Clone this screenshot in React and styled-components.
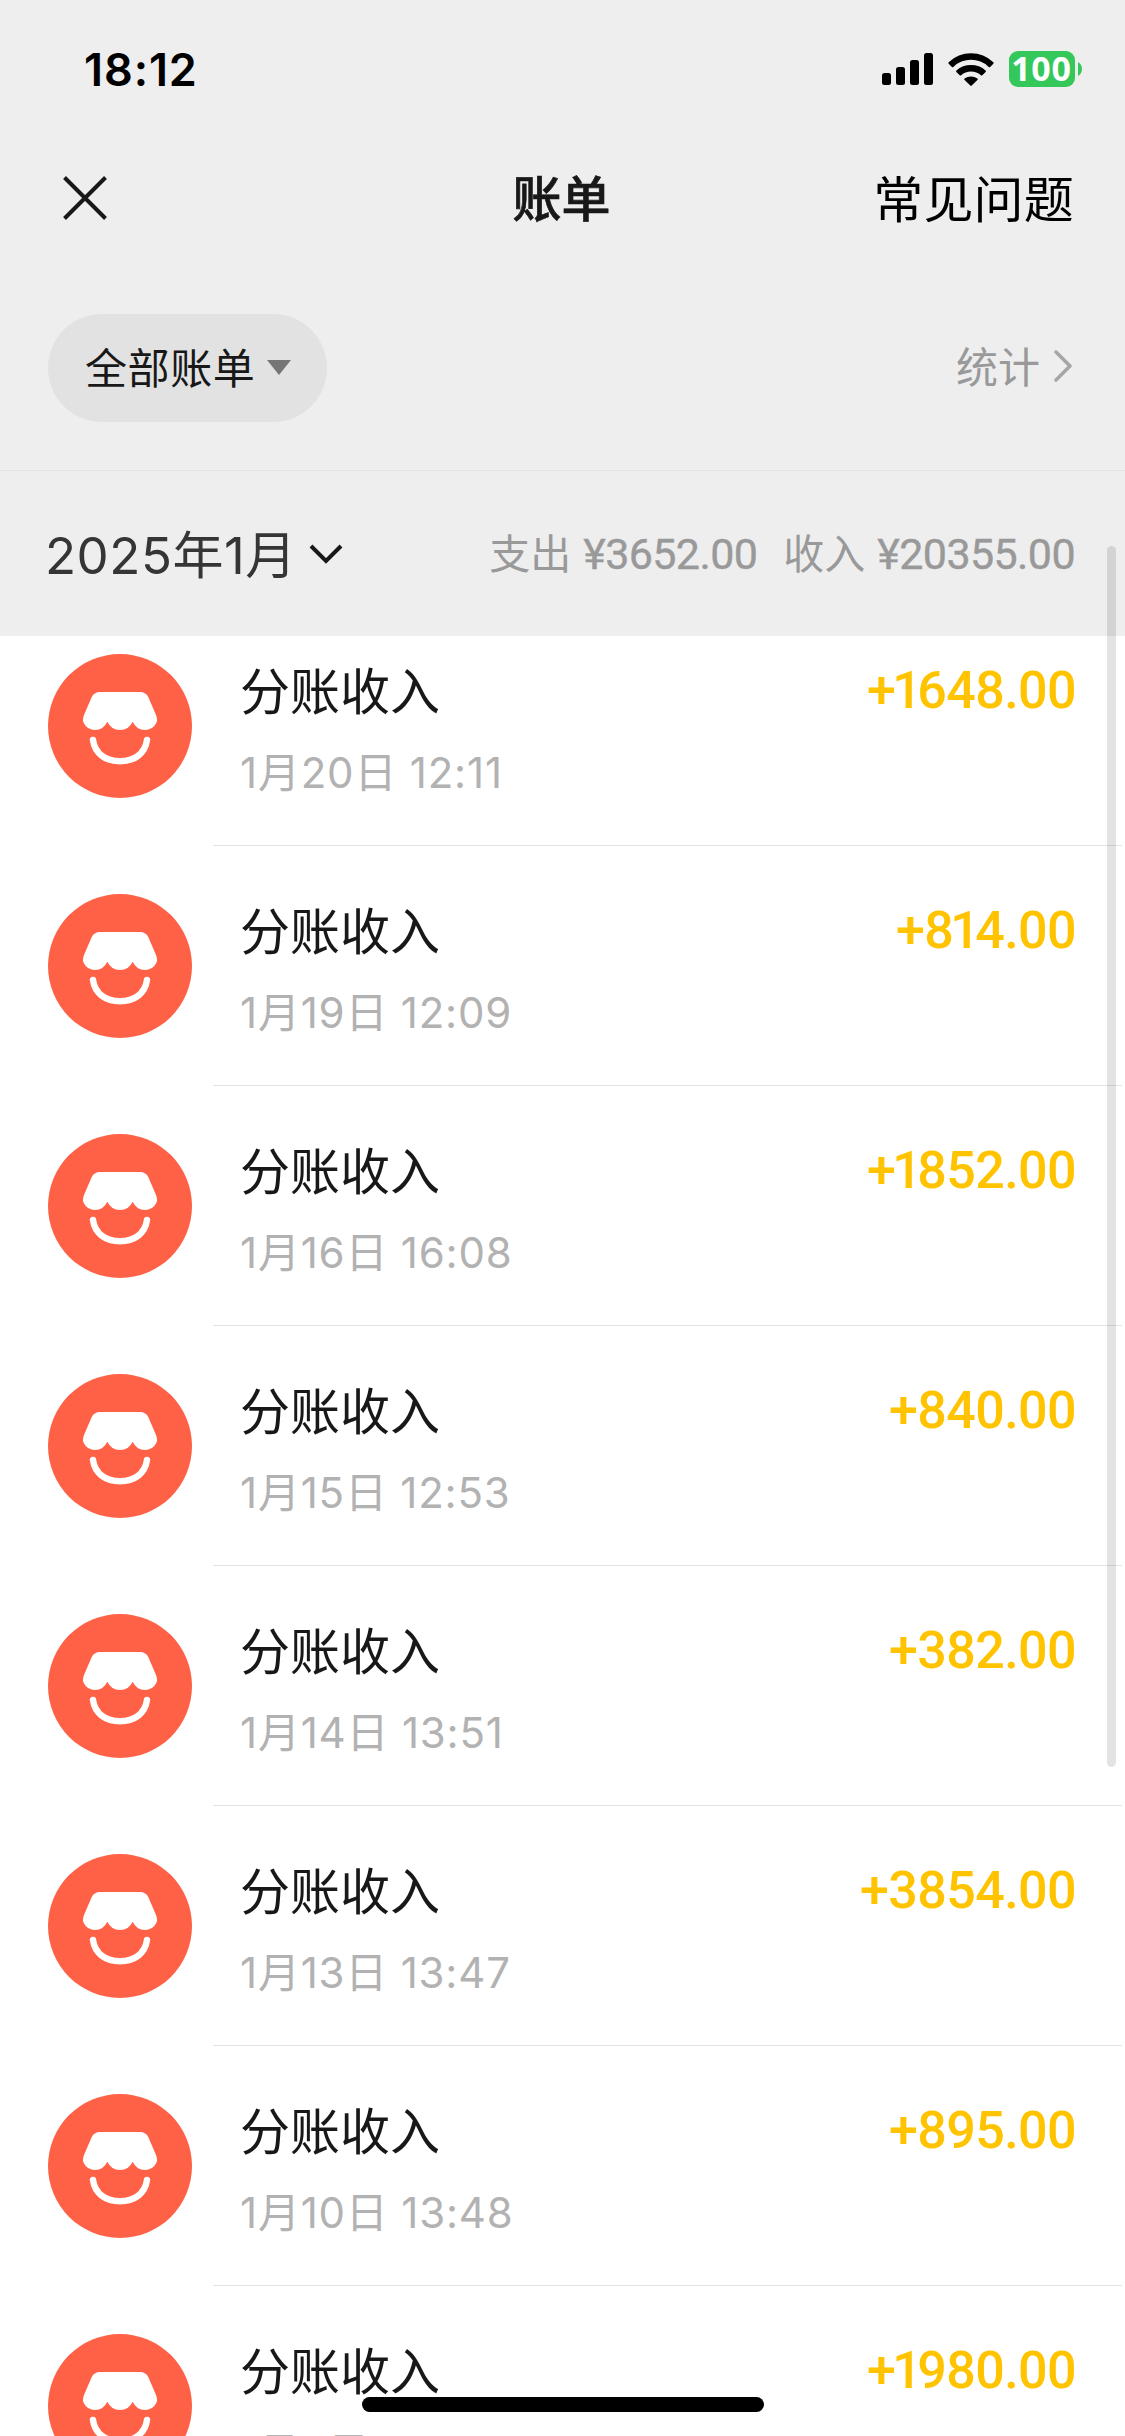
import styled, { createGlobalStyle } from 'styled-components';

const GlobalStyle = createGlobalStyle`
  * {
    box-sizing: border-box;
  }

  body {
    margin: 0;
    background-color: #fff;
    font-family: Inter, 'Noto Sans CJK SC', sans-serif;
  }
`;

const Page = styled.div`
  position: relative;
  display: flex;
  flex-direction: column;
  width: 1125px;
  height: 2436px;
  overflow: hidden;
  background-color: #fff;
`;

const Header = styled.header`
  flex: none;
  height: 636px;
  background-color: #eee;
`;

const StatusBar = styled.div`
  display: flex;
  align-items: center;
  justify-content: space-between;
  height: 138px;
  padding: 0 43px 0 84px;
`;

const Clock = styled.span`
  padding-top: 1px;
  font-size: 45px;
  font-weight: 600;
  line-height: 54px;
  letter-spacing: 0.9px;
  color: #000;
`;

const StatusIcons = styled.div`
  display: flex;
  align-items: center;
  gap: 15px;
`;

const Battery = styled.div`
  display: flex;
  align-items: center;
  gap: 3px;
`;

const BatteryLevel = styled.span`
  width: 66px;
  height: 36px;
  padding-right: 1px;
  border-radius: 9px;
  background-color: #34c759;
  color: #fff;
  font-family: 'Noto Sans', sans-serif;
  font-size: 34px;
  font-weight: 700;
  line-height: 35px;
  letter-spacing: 0.8px;
  text-align: center;
`;

const NavBar = styled.nav`
  display: grid;
  grid-template-columns: 1fr auto 1fr;
  align-items: center;
  height: 120px;
  padding: 0 51px 0 49px;
`;

const CloseIcon = styled.svg`
  width: 44px;
  height: 44px;
  margin-left: 14px;
`;

const NavTitle = styled.h1`
  margin: 0;
  padding-top: 3px;
  font-size: 49px;
  font-weight: 500;
  line-height: 72px;
  color: #181818;
  -webkit-text-stroke: 0.7px #181818;
`;

const NavLink = styled.span`
  justify-self: end;
  padding-top: 4px;
  font-size: 50px;
  line-height: 72px;
  letter-spacing: 0.2px;
  color: #000;
`;

const FilterBar = styled.div`
  display: flex;
  align-items: center;
  justify-content: space-between;
  height: 213px;
  padding: 7px 53px 0 48px;
  border-bottom: 1px solid #e2e2e2;
`;

const FilterPill = styled.div`
  display: flex;
  align-items: center;
  gap: 12px;
  width: 279px;
  height: 108px;
  padding-left: 37px;
  border-radius: 54px;
  background-color: #e2e2e2;
  color: #181818;
  font-size: 42px;
  letter-spacing: 0.6px;
`;

const Label = styled.span`
  padding-bottom: ${({ $lift }) => $lift}px;
`;

const StatsLink = styled.div`
  display: flex;
  align-items: center;
  gap: 14px;
  font-size: 42px;
  color: #999;

  svg {
    margin-bottom: 4px;
  }
`;

const MonthBar = styled.div`
  display: flex;
  align-items: center;
  justify-content: space-between;
  height: 165px;
  padding: 0 50px 0 45px;
`;

const Month = styled.div`
  display: flex;
  align-items: center;
  gap: 12px;
  font-size: 51px;
  letter-spacing: 0.5px;
  color: #353535;
`;

const Totals = styled.div`
  display: flex;
  align-items: baseline;
  padding-bottom: 5px;
  font-size: 41px;
  color: #999;
`;

const TotalValue = styled.span`
  margin: 0 0 0 12px;
  font-family: Roboto, sans-serif;
  font-size: 43px;
  letter-spacing: -0.6px;
  -webkit-text-stroke: 0.4px #999;

  & + span {
    margin-left: 26px;
  }
`;

const List = styled.main`
  flex: 1;
  overflow: hidden;
`;

// the list is scrolled a little under the header
const Rows = styled.ul`
  margin: -30px 0 0;
  padding: 0;
  list-style: none;
`;

const Row = styled.li`
  display: flex;
  height: 240px;
  padding: 0 3px 0 48px;
`;

const Avatar = styled.svg`
  flex: none;
  width: 144px;
  height: 144px;
  margin: 48px 21px 0 0;
`;

const RowBody = styled.div`
  display: flex;
  flex: 1;
  justify-content: space-between;
  padding: 49px 46px 0 27px;
  border-bottom: 1px solid #e3e3e3;
`;

const RowTitle = styled.div`
  padding-top: 1px;
  font-size: 50px;
  line-height: 72px;
  color: #181818;
`;

const RowDate = styled.div`
  margin-top: 15px;
  font-size: 42px;
  line-height: 60px;
  letter-spacing: 0.8px;
  color: #b2b2b2;
`;

const Amount = styled.span`
  font-family: Roboto, sans-serif;
  font-size: 52px;
  font-weight: 500;
  line-height: 72px;
  letter-spacing: -0.6px;
  color: #ffc300;
`;

const NarrowOne = styled.span`
  margin: 0 -4px 0 -3px;
`;

const ScrollThumb = styled.div`
  position: absolute;
  top: 546px;
  right: 9px;
  width: 9px;
  height: 1221px;
  border-radius: 5px;
  background-color: rgba(0, 0, 0, 0.11);
`;

const HomeIndicator = styled.div`
  position: absolute;
  bottom: 24px;
  left: 362px;
  width: 402px;
  height: 15px;
  border-radius: 8px;
  background-color: #000;
`;

const bills = [
  { date: '1月20日 12:11', amount: '+1648.00' },
  { date: '1月19日 12:09', amount: '+814.00' },
  { date: '1月16日 16:08', amount: '+1852.00' },
  { date: '1月15日 12:53', amount: '+840.00' },
  { date: '1月14日 13:51', amount: '+382.00' },
  { date: '1月13日 13:47', amount: '+3854.00' },
  { date: '1月10日 13:48', amount: '+895.00' },
  { date: '1月9日', amount: '+1980.00' },
];

const SignalIcon = () => (
  <svg width="51" height="32" viewBox="0 0 51 32">
    <rect x="0" y="20" width="9" height="12" rx="2.5" />
    <rect x="14" y="14" width="9" height="18" rx="2.5" />
    <rect x="28" y="7" width="9" height="25" rx="2.5" />
    <rect x="42" y="0" width="9" height="32" rx="2.5" />
  </svg>
);

const WifiIcon = () => (
  <svg width="46" height="33" viewBox="0 0 46 33">
    <path d="M.7 9.3a32 32 0 0 1 44.6 0q.7.7 0 1.4l-3.2 3.2q-.7.7-1.4 0a25.5 25.5 0 0 0-35.4 0q-.7.7-1.4 0L.7 10.7q-.7-.7 0-1.4z" />
    <path d="M8.4 17.6a21.5 21.5 0 0 1 29.2 0q.7.7 0 1.4l-3.3 3.3q-.7.6-1.4 0a15 15 0 0 0-19.8 0q-.7.6-1.4 0L8.4 19q-.7-.7 0-1.4z" />
    <path d="M16.6 25.6a10.5 10.5 0 0 1 12.8 0q.7.7 0 1.4l-5.7 5.6q-.7.6-1.4 0L16.6 27q-.7-.7 0-1.4z" />
  </svg>
);

const StoreLogo = () => (
  <Avatar viewBox="0 0 144 144">
    <circle cx="72" cy="72" r="72" fill="#ff6146" />
    <path
      fill="#fff"
      d="M52 38h40q6 0 8.5 5.5L108 61q2 5 0 8.5q-3.5 6.500-11 6.500q-8.500 0-12.300-8.300q-4 8.300-12.700 8.300t-12.700-8.300q-3.800 8.300-12.300 8.300q-7.500 0-11-6.500q-2-3.500 0-8.500l7.500-17.500q2.500-5.500 8.500-5.500z"
    />
    <path
      fill="none"
      stroke="#fff"
      strokeWidth="6.4"
      strokeLinecap="round"
      d="M45 86C47 100 58 107.200 72 107.200S97 100 99 86"
    />
  </Avatar>
);

// a "1" takes less room than the other digits of an amount
const renderAmount = (amount) =>
  amount.split('').map((char, i) => (char === '1' ? <NarrowOne key={i}>1</NarrowOne> : char));

const BillRow = ({ date, amount }) => {
  return (
    <Row>
      <StoreLogo />
      <RowBody>
        <div>
          <RowTitle>分账收入</RowTitle>
          <RowDate>{date}</RowDate>
        </div>
        <Amount>{renderAmount(amount)}</Amount>
      </RowBody>
    </Row>
  );
};

const App = () => {
  return (
    <Page>
      <GlobalStyle />
      <Header>
        <StatusBar>
          <Clock>18:12</Clock>
          <StatusIcons>
            <SignalIcon />
            <WifiIcon />
            <Battery>
              <BatteryLevel>100</BatteryLevel>
              <svg width="4" height="14" viewBox="0 0 4 14">
                <path d="M0 0q4 2.500 4 7t-4 7z" fill="#34c759" />
              </svg>
            </Battery>
          </StatusIcons>
        </StatusBar>
        <NavBar>
          <CloseIcon viewBox="0 0 44 44" fill="none" stroke="#181818" strokeWidth="4">
            <path d="M1.500 1.500l41 41M42.500 1.500l-41 41" />
          </CloseIcon>
          <NavTitle>账单</NavTitle>
          <NavLink>常见问题</NavLink>
        </NavBar>
        <FilterBar>
          <FilterPill>
            <Label $lift={4}>全部账单</Label>
            <svg width="24" height="15" viewBox="0 0 24 15">
              <path d="M0 0h24L12 15z" fill="#767676" />
            </svg>
          </FilterPill>
          <StatsLink>
            <Label $lift={6}>统计</Label>
            <svg width="18" height="32" viewBox="0 0 18 32" fill="none" stroke="#a6a6a6" strokeWidth="3.500">
              <path d="M2 2l14 14-14 14" strokeLinecap="round" strokeLinejoin="round" />
            </svg>
          </StatsLink>
        </FilterBar>
        <MonthBar>
          <Month>
            <Label $lift={4}>2025年1月</Label>
            <svg width="34" height="20" viewBox="0 0 34 20" fill="none" stroke="#181818" strokeWidth="4">
              <path d="M2 2l15 15L32 2" />
            </svg>
          </Month>
          <Totals>
            <span>支出</span>
            <TotalValue>¥3652.00</TotalValue>
            <span>收入</span>
            <TotalValue>¥20355.00</TotalValue>
          </Totals>
        </MonthBar>
      </Header>
      <List>
        <Rows>
          {bills.map((bill) => (
            <BillRow key={bill.date} date={bill.date} amount={bill.amount} />
          ))}
        </Rows>
      </List>
      <ScrollThumb />
      <HomeIndicator />
    </Page>
  );
};

export default App;
